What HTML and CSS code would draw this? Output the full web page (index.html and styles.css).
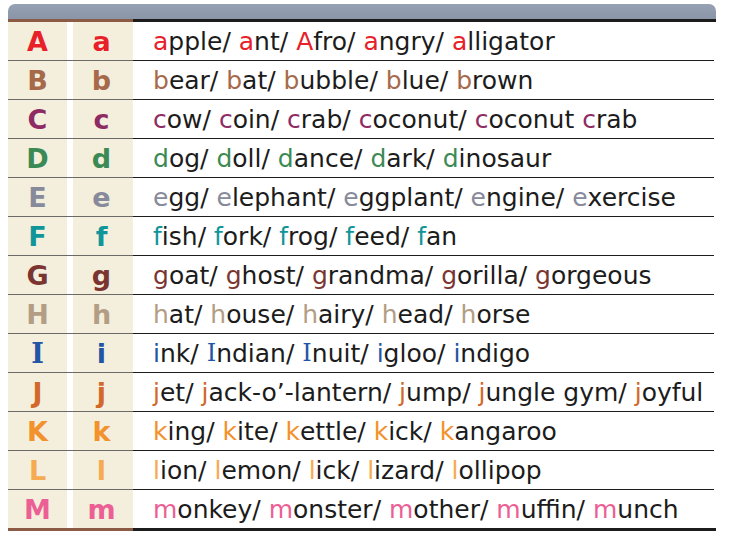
FILE: index.html
```html
<!DOCTYPE html>
<html>
<head>
<meta charset="utf-8">
<link rel="stylesheet" href="styles.css">
</head>
<body>
<div class="chart">
  <div class="head"></div>
  <div class="rule"><span class="rule-l"></span><span class="rule-r"></span></div>
  <div class="rows">
    <div class="row ra"><div class="cap">A</div><div class="gap"></div><div class="low">a</div><div class="words"><span class="k">a</span>pple/ <span class="k">a</span>nt/ <span class="k">A</span>fro/ <span class="k">a</span>ngry/ <span class="k">a</span>lligator</div></div>
    <div class="row rb"><div class="cap">B</div><div class="gap"></div><div class="low">b</div><div class="words"><span class="k">b</span>ear/ <span class="k">b</span>at/ <span class="k">b</span>ubble/ <span class="k">b</span>lue/ <span class="k">b</span>rown</div></div>
    <div class="row rc"><div class="cap">C</div><div class="gap"></div><div class="low">c</div><div class="words"><span class="k">c</span>ow/ <span class="k">c</span>oin/ <span class="k">c</span>rab/ <span class="k">c</span>oconut/ <span class="k">c</span>oconut <span class="k">c</span>rab</div></div>
    <div class="row rd"><div class="cap">D</div><div class="gap"></div><div class="low">d</div><div class="words"><span class="k">d</span>og/ <span class="k">d</span>oll/ <span class="k">d</span>ance/ <span class="k">d</span>ark/ <span class="k">d</span>inosaur</div></div>
    <div class="row re"><div class="cap">E</div><div class="gap"></div><div class="low">e</div><div class="words"><span class="k">e</span>gg/ <span class="k">e</span>lephant/ <span class="k">e</span>ggplant/ <span class="k">e</span>ngine/ <span class="k">e</span>xercise</div></div>
    <div class="row rf"><div class="cap">F</div><div class="gap"></div><div class="low">f</div><div class="words"><span class="k">f</span>ish/ <span class="k">f</span>ork/ <span class="k">f</span>rog/ <span class="k">f</span>eed/ <span class="k">f</span>an</div></div>
    <div class="row rg"><div class="cap">G</div><div class="gap"></div><div class="low">g</div><div class="words"><span class="k">g</span>oat/ <span class="k">g</span>host/ <span class="k">g</span>randma/ <span class="k">g</span>orilla/ <span class="k">g</span>orgeous</div></div>
    <div class="row rh"><div class="cap">H</div><div class="gap"></div><div class="low">h</div><div class="words"><span class="k">h</span>at/ <span class="k">h</span>ouse/ <span class="k">h</span>airy/ <span class="k">h</span>ead/ <span class="k">h</span>orse</div></div>
    <div class="row ri"><div class="cap serif">I</div><div class="gap"></div><div class="low">i</div><div class="words"><span class="k">i</span>nk/ <span class="k serif">I</span>ndian/ <span class="k serif">I</span>nuit/ <span class="k">i</span>gloo/ <span class="k">i</span>ndigo</div></div>
    <div class="row rj"><div class="cap">J</div><div class="gap"></div><div class="low">j</div><div class="words"><span class="k">j</span>et/ <span class="k">j</span>ack-o’-lantern/ <span class="k">j</span>ump/ <span class="k">j</span>ungle gym/ <span class="k">j</span>oyful</div></div>
    <div class="row rk"><div class="cap">K</div><div class="gap"></div><div class="low">k</div><div class="words"><span class="k">k</span>ing/ <span class="k">k</span>ite/ <span class="k">k</span>ettle/ <span class="k">k</span>ick/ <span class="k">k</span>angaroo</div></div>
    <div class="row rl"><div class="cap">L</div><div class="gap"></div><div class="low">l</div><div class="words"><span class="k">l</span>ion/ <span class="k">l</span>emon/ <span class="k">l</span>ick/ <span class="k">l</span>izard/ <span class="k">l</span>ollipop</div></div>
    <div class="row rm"><div class="cap">M</div><div class="gap"></div><div class="low">m</div><div class="words"><span class="k">m</span>onkey/ <span class="k">m</span>onster/ <span class="k">m</span>other/ <span class="k">m</span>uffin/ <span class="k">m</span>unch</div></div>
  </div>
  <div class="rule"><span class="rule-l"></span><span class="rule-r"></span></div>
</div>
</body>
</html>
```

FILE: styles.css
```css
* { box-sizing: border-box; }
html, body { margin: 0; padding: 0; background: #ffffff; }

.chart {
  width: 708px;
  margin: 4px 0 0 8px;
}

.head {
  height: 15px;
  background: linear-gradient(#96a1b4, #8a95a8);
  border-radius: 7px 7px 0 0;
}

.rule {
  display: flex;
  height: 3px;
}
.rule-l { width: 125px; background: #8b5b45; }
.rule-r { flex: 1; background: #1c1c1c; }

.row {
  display: grid;
  grid-template-columns: 59px 6px 60px 1fr;
  height: 39px;
}
.rows .row:last-child { height: 38px; }

.cap, .low, .gap, .words {
  border-bottom: 1px solid #6a6a66;
}
.rows .row:last-child > div { border-bottom: none; }

.cap, .low {
  background: #f4efdc;
  display: flex;
  align-items: center;
  justify-content: center;
  font-family: "DejaVu Sans", sans-serif;
  font-weight: bold;
  font-size: 27px;
  color: var(--c);
}
.low { padding-right: 3px; }
.gap { background: #ffffff; }

.words {
  margin-right: 2px;
  border-bottom-color: #1c1c1c;
  display: flex;
  align-items: center;
  padding-left: 20px;
  font-family: "DejaVu Sans", sans-serif;
  font-size: 25px;
  color: #1c1c1c;
  white-space: pre;
}

.k { color: var(--c); }
.serif { font-family: "DejaVu Serif", serif; }
.words .serif { font-size: 24px; }

.ra { --c: #e8202a; }
.rb { --c: #a66a4a; }
.rc { --c: #8e2b63; }
.rd { --c: #3b8a55; }
.re { --c: #878a9b; }
.rf { --c: #10969a; }
.rg { --c: #7b3531; }
.rh { --c: #b39d84; }
.ri { --c: #2256a5; }
.rj { --c: #d2692b; }
.rk { --c: #f2922c; }
.rl { --c: #f6ab52; }
.rm { --c: #ec5f95; }
```
